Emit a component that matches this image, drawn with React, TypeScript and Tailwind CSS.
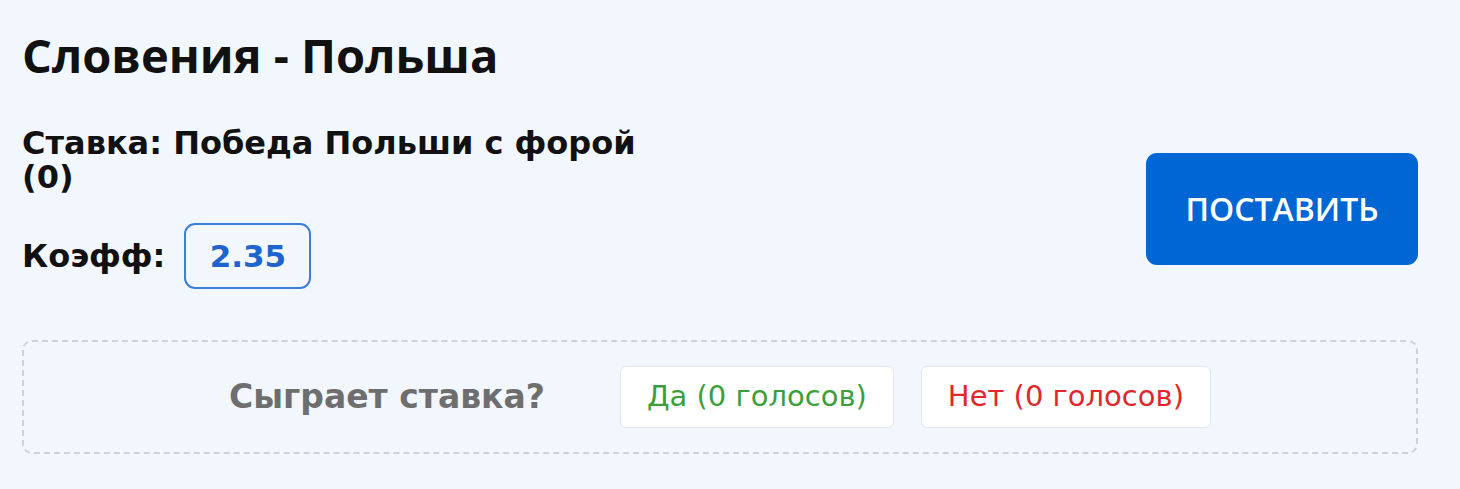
import React from "react";

export default function App() {
  return (
    <div
      className="w-[1460px] h-[489px] bg-[#f2f7fd] overflow-hidden"
      style={{ fontFamily: '"DejaVu Sans", "Open Sans", sans-serif' }}
    >
      <div className="pl-[22px] pr-[42px] pt-[26px]">
        <div className="flex items-start justify-between">
          <div className="flex flex-col">
            <h1 className="font-['Open_Sans',sans-serif] text-[47px] leading-[58px] font-bold text-[#111]">
              Словения - Польша
            </h1>
            <div className="mt-[42px] w-[650px] text-[32px] leading-[34px] font-bold text-[#111]">
              Ставка: Победа Польши с форой (0)
            </div>
            <div className="mt-[29px] flex items-center gap-[19px]">
              <span className="text-[32px] font-bold text-[#111]">Коэфф:</span>
              <span className="flex h-[66px] w-[127px] items-center justify-center rounded-[11px] border-2 border-[#3b7fd9] text-[31px] font-bold text-[#1f63cf]">
                2.35
              </span>
            </div>
          </div>
          <button className="mt-[127px] flex h-[112px] w-[272px] items-center justify-center rounded-[11px] bg-[#0066d4] font-['Open_Sans',sans-serif] text-[32px] font-semibold text-white">
            ПОСТАВИТЬ
          </button>
        </div>
        <div className="mt-[51px] flex h-[114px] items-center justify-center rounded-[10px] border-2 border-dashed border-[#cfd2d6]">
          <span className="text-[33px] font-bold text-[#6e6e6e]">
            Сыграет ставка?
          </span>
          <button className="ml-[75px] flex h-[62px] items-center rounded-[6px] border border-[#e4e8ee] bg-white px-[26px] text-[29px] text-[#3c9f3c]">
            Да (0 голосов)
          </button>
          <button className="ml-[27px] flex h-[62px] items-center rounded-[6px] border border-[#e4e8ee] bg-white px-[26px] text-[29px] text-[#e3262a]">
            Нет (0 голосов)
          </button>
        </div>
      </div>
    </div>
  );
}
